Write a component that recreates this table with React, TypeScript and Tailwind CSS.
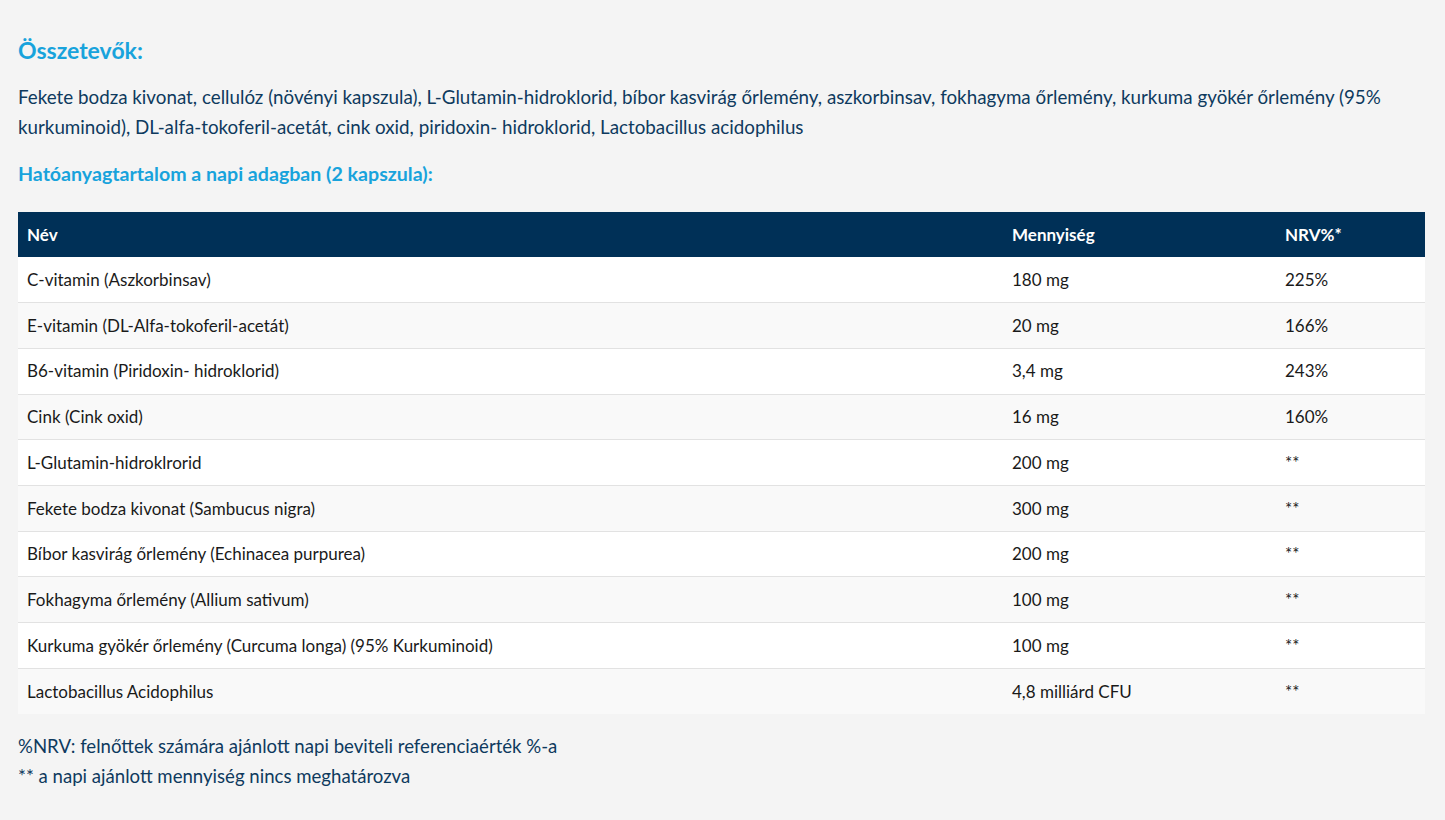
const rows = [
  ['C-vitamin (Aszkorbinsav)', '180 mg', '225%'],
  ['E-vitamin (DL-Alfa-tokoferil-acetát)', '20 mg', '166%'],
  ['B6-vitamin (Piridoxin- hidroklorid)', '3,4 mg', '243%'],
  ['Cink (Cink oxid)', '16 mg', '160%'],
  ['L-Glutamin-hidroklrorid', '200 mg', '**'],
  ['Fekete bodza kivonat (Sambucus nigra)', '300 mg', '**'],
  ['Bíbor kasvirág őrlemény (Echinacea purpurea)', '200 mg', '**'],
  ['Fokhagyma őrlemény (Allium sativum)', '100 mg', '**'],
  ['Kurkuma gyökér őrlemény (Curcuma longa) (95% Kurkuminoid)', '100 mg', '**'],
  ['Lactobacillus Acidophilus', '4,8 milliárd CFU', '**'],
]

export default function App() {
  return (
    <div className="min-h-screen bg-[#f4f4f4] px-[18px] pt-[34px] pb-10 text-[#0e3a5e] font-['Lato','Noto_Sans',sans-serif]">
      <h2 className="text-[23px] leading-[32px] font-bold text-[#18a3dc]">Összetevők:</h2>

      <p className="mt-[16px] text-[18.8px] leading-[30px] pr-[40px]">
        Fekete bodza kivonat, cellulóz (növényi kapszula), L-Glutamin-hidroklorid, bíbor kasvirág őrlemény, aszkorbinsav, fokhagyma őrlemény, kurkuma gyökér őrlemény (95% kurkuminoid), DL-alfa-tokoferil-acetát, cink oxid, piridoxin- hidroklorid, Lactobacillus acidophilus
      </p>

      <h3 className="mt-[17px] text-[19.6px] leading-[30px] font-bold text-[#18a3dc]">Hatóanyagtartalom a napi adagban (2 kapszula):</h3>

      <table className="mt-[23px] w-[1407px] border-collapse text-[17px]">
        <thead>
          <tr className="bg-[#003057] text-white h-[45px]">
            <th className="w-[985px] px-[9px] text-left font-bold">Név</th>
            <th className="w-[273px] px-[9px] text-left font-bold">Mennyiség</th>
            <th className="px-[9px] text-left font-bold">NRV%*</th>
          </tr>
        </thead>
        <tbody>
          {rows.map((r, i) => (
            <tr
              key={i}
              className={`h-[45.7px] ${i % 2 === 0 ? 'bg-white' : 'bg-[#f9f9f9]'} ${i < rows.length - 1 ? 'border-b border-[#e2e2e2]' : ''} text-[#1a1a1a]`}
            >
              <td className="px-[9px]">{r[0]}</td>
              <td className="px-[9px]">{r[1]}</td>
              <td className="px-[9px]">{r[2]}</td>
            </tr>
          ))}
        </tbody>
      </table>

      <div className="mt-[17px] text-[18.6px] leading-[30px]">
        <p>%NRV: felnőttek számára ajánlott napi beviteli referenciaérték %-a</p>
        <p>** a napi ajánlott mennyiség nincs meghatározva</p>
      </div>
    </div>
  )
}
